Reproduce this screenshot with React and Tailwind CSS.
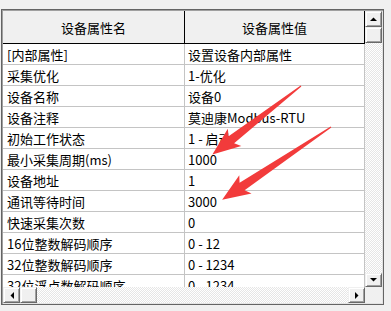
import React from "react";

const rows = [
  ["[内部属性]", "设置设备内部属性"],
  ["采集优化", "1-优化"],
  ["设备名称", "设备0"],
  ["设备注释", "莫迪康Modbus-RTU"],
  ["初始工作状态", "1 - 启动"],
  ["最小采集周期(ms)", "1000"],
  ["设备地址", "1"],
  ["通讯等待时间", "3000"],
  ["快速采集次数", "0"],
  ["16位整数解码顺序", "0 - 12"],
  ["32位整数解码顺序", "0 - 1234"],
  ["32位浮点数解码顺序", "0 - 1234"],
];

const btn =
  "flex items-center justify-center bg-[#f0f0f0] border-t border-l border-t-[#f0f0f0] border-l-[#f0f0f0] border-r border-b border-r-[#696969] border-b-[#696969] shadow-[inset_1px_1px_#ffffff,inset_-1px_-1px_#a0a0a0]";

const track =
  "bg-[repeating-conic-gradient(#e6e6e6_0_25%,#ffffff_0_50%)] bg-[length:2px_2px]";

function Tri({ dir }) {
  const pts = {
    up: "0,4 7,4 3.5,0.5",
    down: "0,0 7,0 3.5,3.5",
    left: "4,0 4,7 0.5,3.5",
    right: "0,0 0,7 3.5,3.5",
  }[dir];
  const vertical = dir === "up" || dir === "down";
  return (
    <svg width={vertical ? 7 : 4} height={vertical ? 4 : 7}>
      <polygon points={pts} fill="#000" />
    </svg>
  );
}

function Arrow({ x, y, angle, len }) {
  const L = len;
  return (
    <g transform={`translate(${x} ${y}) rotate(${angle})`}>
      <polygon
        points={`0,-0.6 ${L - 24},-4.5 ${L - 28},-11 ${L},0 ${L - 28},11 ${L - 24},4.5 0,0.6`}
        fill="#f23b3b"
      />
    </g>
  );
}

export default function App() {
  return (
    <div
      className="relative w-[391px] h-[311px] bg-[#f0f0f0] pt-[9px] pl-[1px] overflow-hidden text-[13px] text-black leading-none"
      style={{ fontFamily: '"Noto Sans CJK SC", "Liberation Sans", sans-serif' }}
    >
      <div className="w-[383px] h-[296px] border border-[#646464] bg-[#a0a0a0] p-[1px] pb-0 pr-0">
        <div className="flex flex-col w-[380px] h-[293px] bg-[#f0f0f0] border-r border-b border-r-[#e3e3e3] border-b-[#e3e3e3]">
          <div className="flex h-[276px]">
            {/* table */}
            <div className="w-[362px] h-full overflow-hidden bg-white">
              <div className="flex h-[33px] bg-[#f0f0f0] border-b border-black">
                <div className="w-[182px] flex items-center justify-center border-r border-black">
                  设备属性名
                </div>
                <div className="w-[180px] flex items-center justify-center border-r border-black">
                  设备属性值
                </div>
              </div>
              {rows.map(([k, v]) => (
                <div key={k} className="flex h-[21px] border-b border-[#c4c4c4]">
                  <div className="w-[182px] flex items-center pl-[4px] border-r border-[#c4c4c4] whitespace-pre">
                    {k}
                  </div>
                  <div className="w-[180px] flex items-center pl-[3px] border-r border-[#c4c4c4] whitespace-pre">
                    {v}
                  </div>
                </div>
              ))}
            </div>
            {/* vertical scrollbar */}
            <div className={`w-[17px] h-full flex flex-col ${track}`}>
              <div className={`${btn} h-[16px]`}>
                <Tri dir="up" />
              </div>
              <div className={`${btn} h-[16px]`} />
              <div className="flex-1" />
              <div className={`${btn} h-[14px]`}>
                <Tri dir="down" />
              </div>
            </div>
          </div>
          {/* horizontal scrollbar */}
          <div className="flex h-[16px]">
            <div className={`flex w-[362px] h-full ${track}`}>
              <div className={`${btn} w-[17px]`}>
                <Tri dir="left" />
              </div>
              <div className={`${btn} w-[17px]`} />
              <div className="flex-1" />
              <div className={`${btn} w-[17px]`}>
                <Tri dir="right" />
              </div>
            </div>
            <div className="w-[17px] h-full bg-[#f0f0f0]" />
          </div>
        </div>
      </div>

      {/* red annotation arrows */}
      <svg className="absolute left-0 top-0" width="391" height="311">
        <Arrow x={301} y={86} angle={142.3} len={112} />
        <Arrow x={331} y={127} angle={146.2} len={131} />
      </svg>
    </div>
  );
}
